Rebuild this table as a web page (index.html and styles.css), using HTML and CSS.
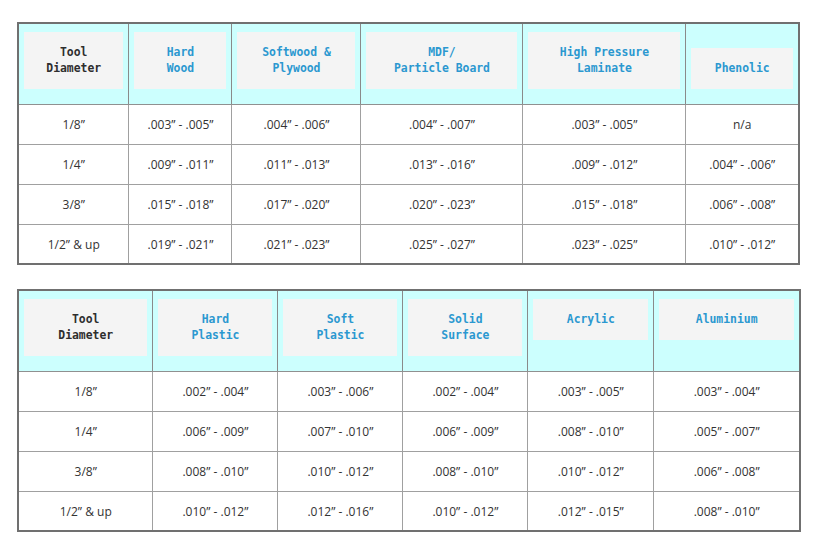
FILE: index.html
```html
<!DOCTYPE html>
<html>
<head>
<meta charset="utf-8">
<link rel="stylesheet" href="styles.css">
</head>
<body>
<div class="page">
<table class="chart chart-bottom t1">
  <colgroup>
    <col class="a1"><col class="a2"><col class="a3"><col class="a4"><col class="a5"><col class="a6">
  </colgroup>
  <thead>
    <tr>
      <th class="first"><div class="lbl">Tool<br>Diameter</div></th>
      <th><div class="lbl">Hard<br>Wood</div></th>
      <th><div class="lbl">Softwood &amp;<br>Plywood</div></th>
      <th><div class="lbl">MDF/<br>Particle Board</div></th>
      <th><div class="lbl">High Pressure<br>Laminate</div></th>
      <th><div class="lbl">Phenolic</div></th>
    </tr>
  </thead>
  <tbody>
    <tr><td>1/8”</td><td>.003” - .005”</td><td>.004” - .006”</td><td>.004” - .007”</td><td>.003” - .005”</td><td>n/a</td></tr>
    <tr><td>1/4”</td><td>.009” - .011”</td><td>.011” - .013”</td><td>.013” - .016”</td><td>.009” - .012”</td><td>.004” - .006”</td></tr>
    <tr><td>3/8”</td><td>.015” - .018”</td><td>.017” - .020”</td><td>.020” - .023”</td><td>.015” - .018”</td><td>.006” - .008”</td></tr>
    <tr class="last"><td>1/2” &amp; up</td><td>.019” - .021”</td><td>.021” - .023”</td><td>.025” - .027”</td><td>.023” - .025”</td><td>.010” - .012”</td></tr>
  </tbody>
</table>

<table class="chart chart-top t2">
  <colgroup>
    <col class="b1"><col class="b2"><col class="b3"><col class="b4"><col class="b5"><col class="b6">
  </colgroup>
  <thead>
    <tr>
      <th class="first"><div class="lbl">Tool<br>Diameter</div></th>
      <th><div class="lbl">Hard<br>Plastic</div></th>
      <th><div class="lbl">Soft<br>Plastic</div></th>
      <th><div class="lbl">Solid<br>Surface</div></th>
      <th><div class="lbl">Acrylic</div></th>
      <th><div class="lbl">Aluminium</div></th>
    </tr>
  </thead>
  <tbody>
    <tr><td>1/8”</td><td>.002” - .004”</td><td>.003” - .006”</td><td>.002” - .004”</td><td>.003” - .005”</td><td>.003” - .004”</td></tr>
    <tr><td>1/4”</td><td>.006” - .009”</td><td>.007” - .010”</td><td>.006” - .009”</td><td>.008” - .010”</td><td>.005” - .007”</td></tr>
    <tr><td>3/8”</td><td>.008” - .010”</td><td>.010” - .012”</td><td>.008” - .010”</td><td>.010” - .012”</td><td>.006” - .008”</td></tr>
    <tr class="last"><td>1/2” &amp; up</td><td>.010” - .012”</td><td>.012” - .016”</td><td>.010” - .012”</td><td>.012” - .015”</td><td>.008” - .010”</td></tr>
  </tbody>
</table>
</div>
</body>
</html>
```

FILE: styles.css
```css
html, body {
  margin: 0;
  padding: 0;
  background: #ffffff;
}

.page {
  padding: 22px 0 0 17px;
  display: flex;
  flex-direction: column;
  gap: 24px;
}

.chart {
  border-collapse: collapse;
  table-layout: fixed;
  border: 2px solid #707070;
  font-family: "Open Sans", "Liberation Sans", sans-serif;
  font-size: 12px;
  color: #333333;
}

.t1 { width: 783px; }
.t2 { width: 784px; }

.a1 { width: 14.21%; }
.a2 { width: 13.19%; }
.a3 { width: 16.52%; }
.a4 { width: 20.74%; }
.a5 { width: 20.87%; }
.a6 { width: 14.47%; }

.b1 { width: 17.26%; }
.b2 { width: 15.98%; }
.b3 { width: 15.98%; }
.b4 { width: 15.98%; }
.b5 { width: 16.11%; }
.b6 { width: 18.69%; }

.chart th {
  background: #ccfffe;
  padding: 8px 5px 15px;
  height: 57px;
  border: 1px solid #8a8a8a;
  border-bottom: 1px solid #909090;
}

.chart-bottom th { vertical-align: bottom; }
.chart-top th { vertical-align: top; }

.lbl {
  background: #f4f4f4;
  padding: 12px 4px 13px;
  line-height: 16px;
  font-family: "DejaVu Sans Mono", "Liberation Mono", monospace;
  font-weight: bold;
  font-size: 11.4px;
  color: #2b98d0;
  text-align: center;
}

.first .lbl { color: #2e2e2e; }

.chart td {
  height: 39px;
  padding: 0 4px;
  text-align: center;
  vertical-align: middle;
  border: 1px solid #a0a0a0;
}

.chart .last td { height: 38px; }
```
